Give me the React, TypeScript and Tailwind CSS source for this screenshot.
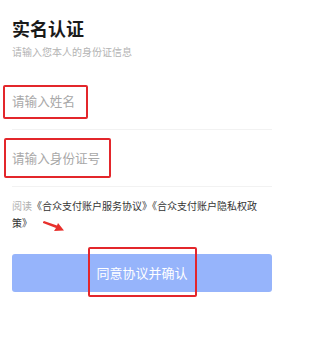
import React from 'react';

const font = { fontFamily: '"Noto Sans CJK SC", "Noto Sans", sans-serif' };

const Mark = ({ className }: { className: string }) => (
  <div className={`pointer-events-none absolute rounded-[2px] border-2 border-[#e3262b] ${className}`} />
);

export default function App() {
  return (
    <div className="relative h-[358px] w-[284px] overflow-hidden bg-white px-3 pt-[15px]" style={font}>
      <h1 className="text-[18px] font-bold leading-[26px] text-[#1a1a1a]">实名认证</h1>
      <p className="mt-1 text-[10px] leading-[14px] text-[#b3b3b3]">请输入您本人的身份证信息</p>

      <div className="mt-[15px]">
        <div className="relative flex h-[56px] items-center border-b border-[#f2f2f2]">
          <span className="text-[12.6px] text-[#a8a8a8]">请输入姓名</span>
          <Mark className="left-[-9px] top-[11px] h-[34px] w-[85px]" />
        </div>
        <div className="relative flex h-[57px] items-center border-b border-[#f2f2f2]">
          <span className="text-[12.6px] text-[#a8a8a8]">请输入身份证号</span>
          <Mark className="left-[-8px] top-[8px] h-[40px] w-[107px]" />
        </div>
      </div>

      <div className="relative mt-[10px] w-[255px] text-[10px] leading-[17px] text-[#333]">
        <span className="text-[#b0b0b0]">阅读</span>
        《合众支付账户服务协议》《合众支付账户隐私权政策》
        <svg className="absolute left-[31px] top-[24px]" width="22" height="12" viewBox="0 0 22 12">
          <polygon points="0,1 1,0 14,4.5 15,2 21,9.5 11,10 13,7 0,2" fill="#e8302c" />
        </svg>
      </div>

      <div className="relative mt-[23px]">
        <button className="flex h-[38px] w-full items-center justify-center rounded-[3px] bg-[#96b4fb] text-[13px] text-white">
          同意协议并确认
        </button>
        <Mark className="left-[76px] top-[-7px] h-[50px] w-[109px]" />
      </div>
    </div>
  );
}
